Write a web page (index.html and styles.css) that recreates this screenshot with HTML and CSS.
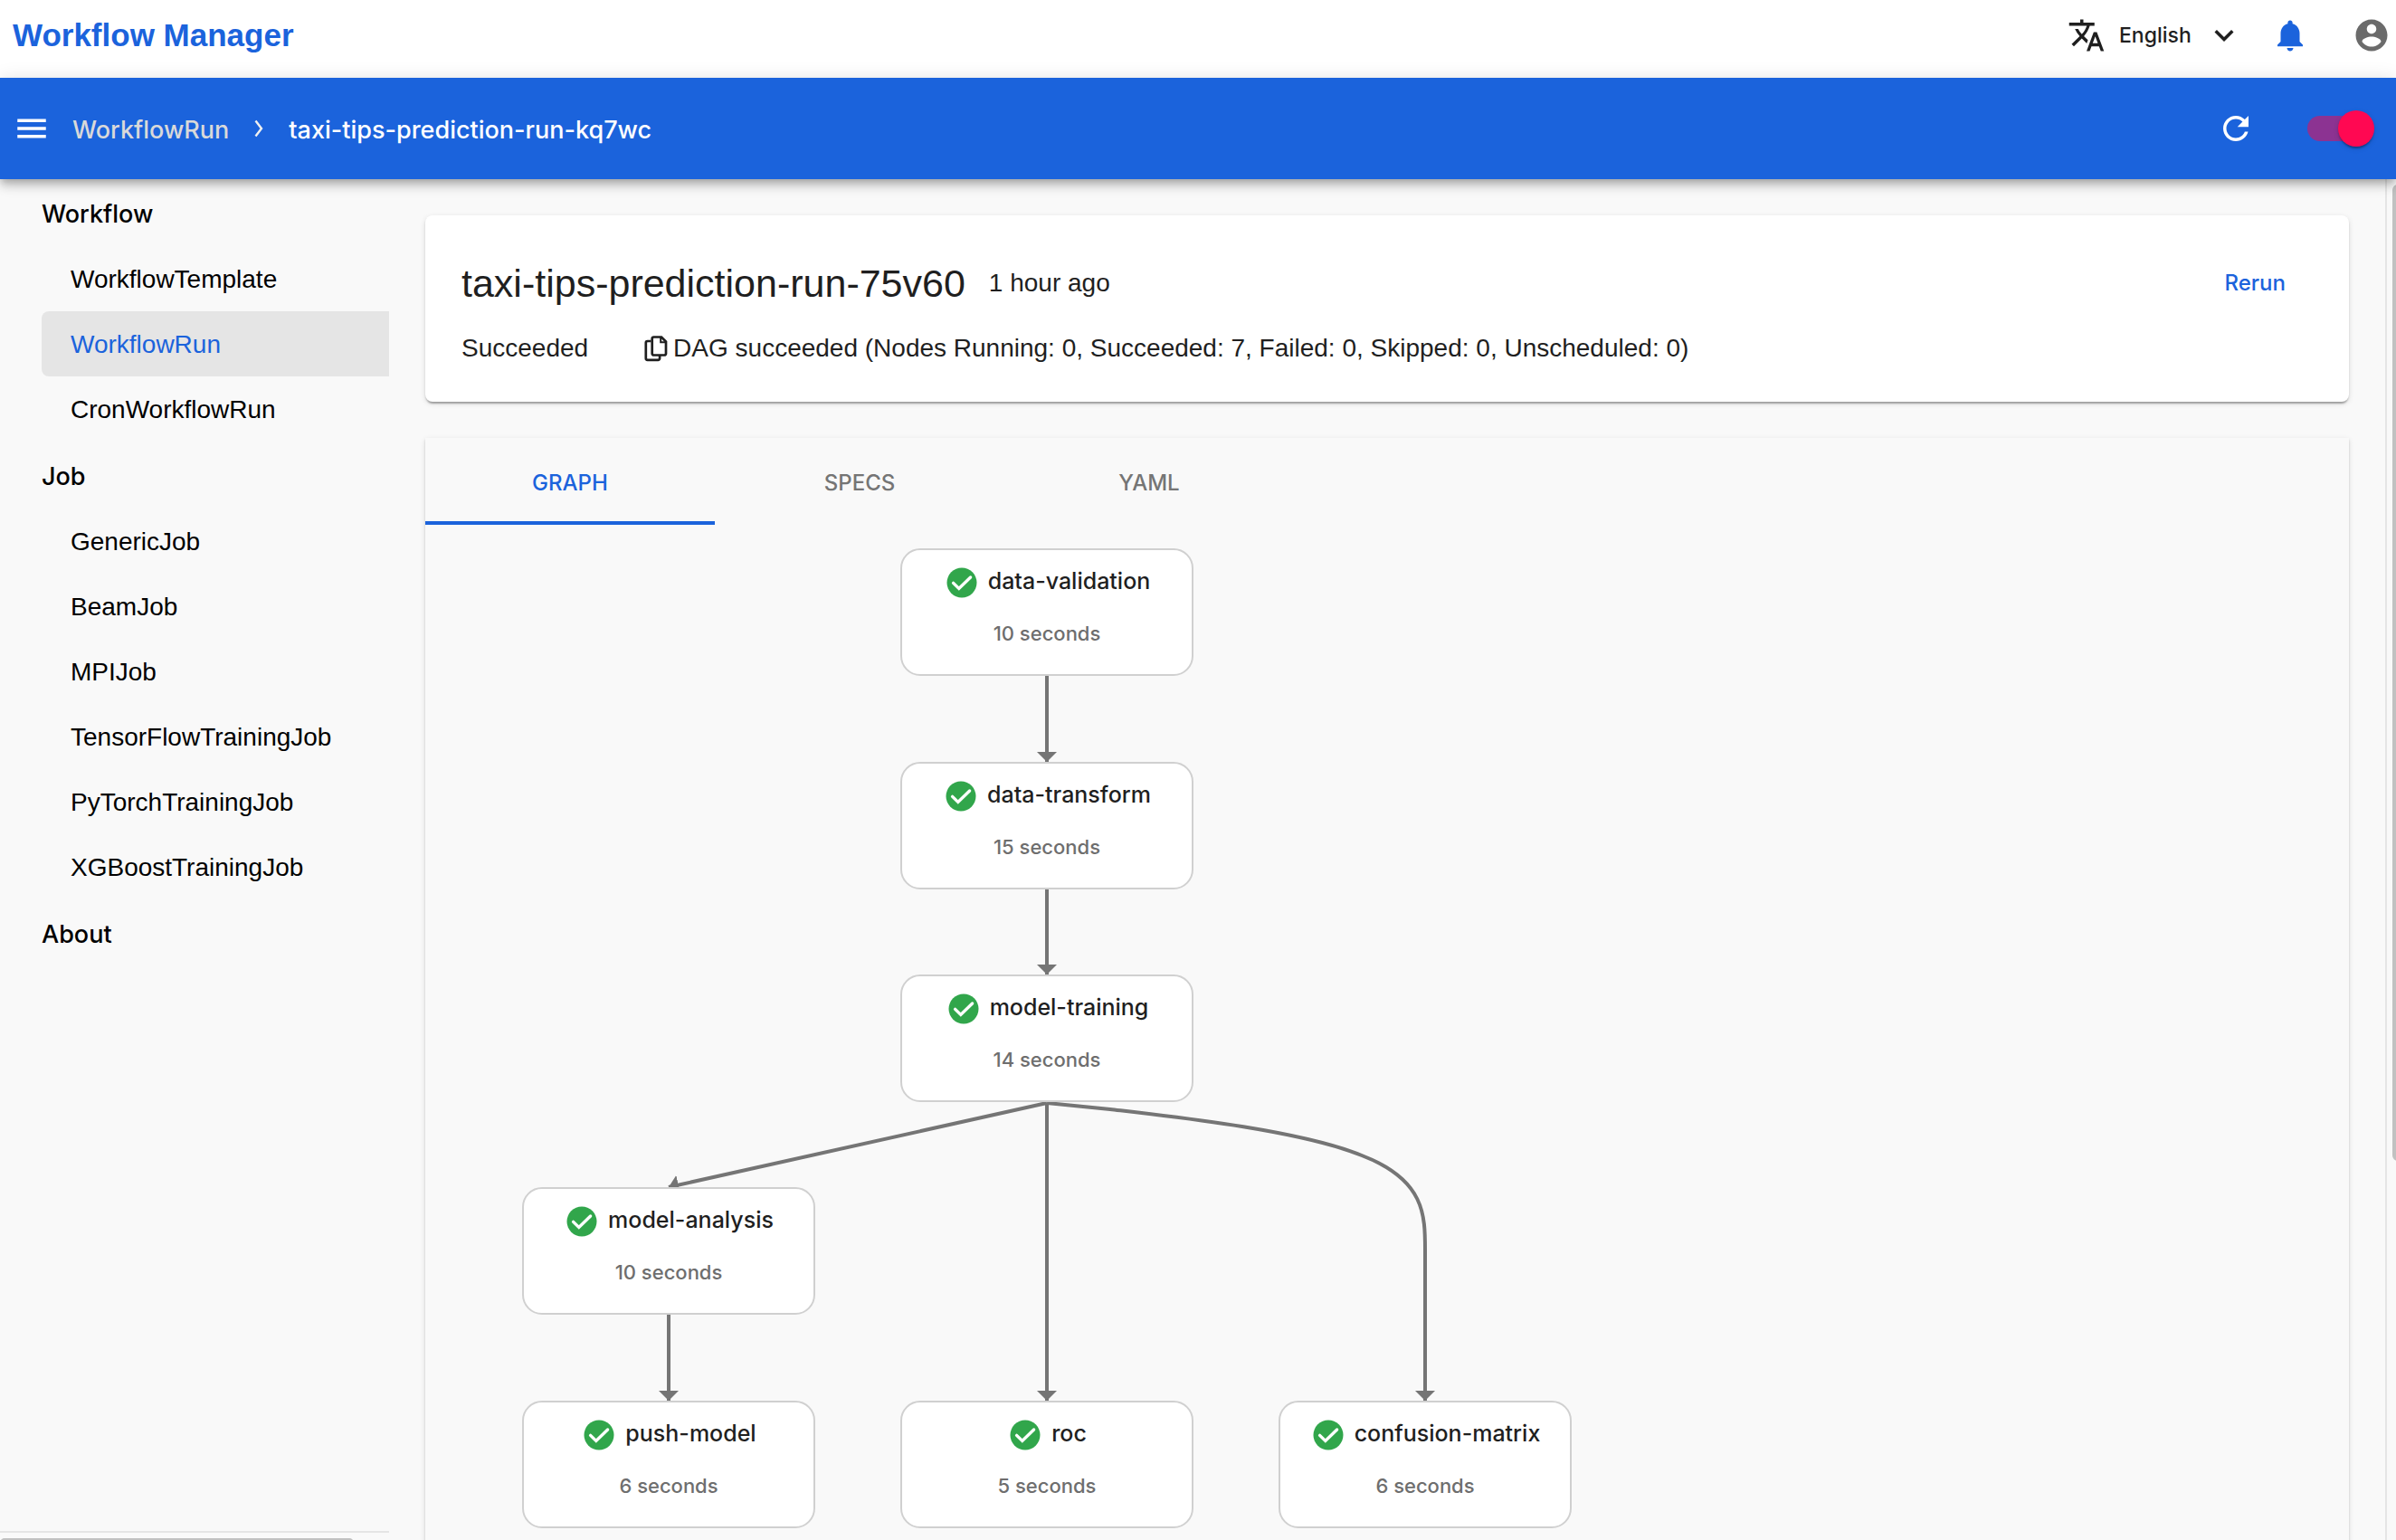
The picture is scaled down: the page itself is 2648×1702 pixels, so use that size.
FILE: index.html
```html
<!DOCTYPE html>
<html lang="en">
<head>
<meta charset="utf-8">
<meta name="viewport" content="width=device-width, initial-scale=1">
<title>Workflow Manager</title>
<link rel="stylesheet" href="styles.css">
</head>
<body>
<svg class="defs" aria-hidden="true">
  <symbol id="check" viewBox="0 0 40 40">
    <circle cx="20" cy="22" r="16.5" fill="#31a64b"/>
    <path d="M10.6 22.4l6.2 6L29.6 16" fill="none" stroke="#fff" stroke-width="3.4" stroke-linecap="round" stroke-linejoin="miter"/>
  </symbol>
</svg>

<header class="topbar">
  <a class="brand" href="#">Workflow Manager</a>
  <div class="topbar-tools">
    <label class="language">
      <svg class="icon" viewBox="0 0 24 24" aria-hidden="true"><path d="M12.87 15.07l-2.54-2.51.03-.03c1.74-1.94 2.98-4.17 3.71-6.53H17V4h-7V2H8v2H1v1.99h11.17C11.5 7.92 10.44 9.75 9 11.35 8.07 10.32 7.3 9.19 6.69 8h-2c.73 1.63 1.73 3.17 2.98 4.56l-5.09 5.02L4 19l5-5 3.11 3.11.76-2.04zM18.5 10h-2L12 22h2l1.12-3h4.75L21 22h2l-4.5-12zm-2.62 7l1.62-4.33L19.12 17h-3.24z"/></svg>
      <select class="language-select" aria-label="Language"><option>English</option></select>
      <svg class="icon" viewBox="0 0 24 24" aria-hidden="true"><path d="M16.59 8.59L12 13.17 7.41 8.59 6 10l6 6 6-6z"/></svg>
    </label>
    <button class="icon-button notify" aria-label="Notifications">
      <svg class="icon" viewBox="0 0 24 24"><path d="M12 22c1.1 0 2-.9 2-2h-4c0 1.1.89 2 2 2zm6-6v-5c0-3.07-1.64-5.64-4.5-6.32V4c0-.83-.67-1.5-1.5-1.5s-1.5.67-1.5 1.5v.68C7.63 5.36 6 7.92 6 11v5l-2 2v1h16v-1l-2-2z"/></svg>
    </button>
    <button class="icon-button account" aria-label="Account">
      <svg class="icon" viewBox="0 0 24 24"><path d="M12 2C6.48 2 2 6.48 2 12s4.48 10 10 10 10-4.48 10-10S17.52 2 12 2zm0 3c1.66 0 3 1.34 3 3s-1.34 3-3 3-3-1.34-3-3 1.34-3 3-3zm0 14.2c-2.5 0-4.71-1.28-6-3.22.03-1.99 4-3.08 6-3.08 1.99 0 5.97 1.09 6 3.08-1.29 1.94-3.5 3.22-6 3.22z"/></svg>
    </button>
  </div>
</header>

<div class="appbar">
  <button class="icon-button" aria-label="Toggle menu">
    <svg class="icon" viewBox="0 0 24 24"><path d="M3 18h18v-2H3v2zm0-5h18v-2H3v2zm0-7v2h18V6H3z"/></svg>
  </button>
  <nav class="crumbs" aria-label="Breadcrumb">
    <a class="crumb" href="#">WorkflowRun</a>
    <svg class="crumb-sep" viewBox="0 0 10 20" aria-hidden="true"><path d="M1.5 1.5L8 10l-6.500 8.500" fill="none" stroke="currentColor" stroke-width="2.400"/></svg>
    <span class="crumb current">taxi-tips-prediction-run-kq7wc</span>
  </nav>
  <button class="icon-button" aria-label="Refresh">
    <svg class="icon" viewBox="0 0 24 24"><path d="M17.65 6.35C16.2 4.9 14.21 4 12 4c-4.42 0-7.99 3.58-7.99 8s3.570 8 7.990 8c3.730 0 6.840-2.550 7.730-6h-2.080c-.82 2.330-3.040 4-5.650 4-3.310 0-6-2.690-6-6s2.690-6 6-6c1.660 0 3.140.69 4.220 1.780L13 11h7V4l-2.350 2.350z"/></svg>
  </button>
  <input class="switch" type="checkbox" checked aria-label="Auto refresh">
</div>

<div class="layout">
  <aside class="sidebar">
    <nav class="menu">
      <h2 class="menu-title">Workflow</h2>
      <a class="menu-item" href="#">WorkflowTemplate</a>
      <a class="menu-item active" href="#">WorkflowRun</a>
      <a class="menu-item" href="#">CronWorkflowRun</a>
      <h2 class="menu-title">Job</h2>
      <a class="menu-item" href="#">GenericJob</a>
      <a class="menu-item" href="#">BeamJob</a>
      <a class="menu-item" href="#">MPIJob</a>
      <a class="menu-item" href="#">TensorFlowTrainingJob</a>
      <a class="menu-item" href="#">PyTorchTrainingJob</a>
      <a class="menu-item" href="#">XGBoostTrainingJob</a>
      <h2 class="menu-title">About</h2>
    </nav>
    <div class="track-x"><div class="thumb-x"></div></div>
  </aside>

  <main class="content">
    <section class="card summary">
      <div class="summary-head">
        <h1>taxi-tips-prediction-run-75v60</h1>
        <span>1 hour ago</span>
        <button class="rerun">Rerun</button>
      </div>
      <div class="summary-status">
        <span class="phase">Succeeded</span>
        <button class="icon-button copy" aria-label="Copy message">
          <svg class="copy-icon" viewBox="0 0 28 30"><g fill="none" stroke="currentColor" stroke-width="2.700"><path d="M10.500 2.500h8.500l5 5v13.200a1.800 1.800 0 0 1-1.800 1.800H10.500a1.800 1.800 0 0 1-1.800-1.800V4.300a1.800 1.800 0 0 1 1.800-1.800z"/><path d="M7.500 7H3.600A1.800 1.800 0 0 0 1.800 8.800v17.200a1.800 1.800 0 0 0 1.800 1.800h11.700a1.800 1.800 0 0 0 1.800-1.800v-3"/><path d="M18.200 3v5.300h5.500" stroke-width="2"/></g></svg>
        </button>
        <span>DAG succeeded (Nodes Running: 0, Succeeded: 7, Failed: 0, Skipped: 0, Unscheduled: 0)</span>
      </div>
    </section>

    <section class="card detail">
      <div class="tabs" role="tablist">
        <button class="tab selected" role="tab" aria-selected="true">GRAPH</button>
        <button class="tab" role="tab" aria-selected="false">SPECS</button>
        <button class="tab" role="tab" aria-selected="false">YAML</button>
      </div>
      <div class="graph">
        <svg class="edges" width="1300" height="1140" viewBox="0 0 1300 1140" aria-hidden="true">
          <defs>
            <marker id="arrow" markerUnits="userSpaceOnUse" markerWidth="11" markerHeight="22" refX="11" refY="11" orient="auto"><path d="M0 0L11 11L0 22z" fill="#757575"/></marker>
          </defs>
          <g fill="none" stroke="#757575" stroke-width="4" marker-end="url(#arrow)">
            <path d="M687 167V262"/>
            <path d="M687 403V497"/>
            <path d="M687 639V968"/>
            <path d="M687 639L269 732"/>
            <path d="M269 873V968"/>
            <path d="M687 639L757 646C826 654 966 669 1035 697C1105 724 1105 763 1105 802V968"/>
          </g>
        </svg>
        <div class="node n1"><div class="node-name"><svg><use href="#check"/></svg>data-validation</div><div class="node-time">10 seconds</div></div>
        <div class="node n2"><div class="node-name"><svg><use href="#check"/></svg>data-transform</div><div class="node-time">15 seconds</div></div>
        <div class="node n3"><div class="node-name"><svg><use href="#check"/></svg>model-training</div><div class="node-time">14 seconds</div></div>
        <div class="node n4"><div class="node-name"><svg><use href="#check"/></svg>model-analysis</div><div class="node-time">10 seconds</div></div>
        <div class="node n5"><div class="node-name"><svg><use href="#check"/></svg>push-model</div><div class="node-time">6 seconds</div></div>
        <div class="node n6"><div class="node-name"><svg><use href="#check"/></svg>roc</div><div class="node-time">5 seconds</div></div>
        <div class="node n7"><div class="node-name"><svg><use href="#check"/></svg>confusion-matrix</div><div class="node-time">6 seconds</div></div>
      </div>
    </section>
  </main>
  <div class="track-y"><div class="thumb-y"></div></div>
</div>
</body>
</html>
```
FILE: styles.css
```css
* { box-sizing: border-box; }

body {
  margin: 0;
  height: 100vh;
  display: flex;
  flex-direction: column;
  overflow: hidden;
  background: #f9f9f9;
  color: #1f1f1f;
  font-family: "Liberation Sans", Arial, sans-serif;
  font-size: 28px;
  line-height: 36px;
}

a { color: inherit; text-decoration: none; }

button,
select {
  padding: 0;
  border: 0;
  background: none;
  color: inherit;
  font: 500 24px/36px Inter, sans-serif;
}

.defs { position: absolute; width: 0; height: 0; }

.icon { display: block; width: 42px; height: 42px; fill: currentColor; }
.icon-button { display: flex; flex: none; }

/* Top bar */
.topbar {
  display: flex;
  align-items: center;
  justify-content: space-between;
  height: 86px;
  padding: 0 6px 8px 14px;
  background: #fff;
}
.brand { color: #1b63dc; font-size: 35px; font-weight: 700; }
.topbar-tools { display: flex; align-items: center; }
.language { display: flex; align-items: center; gap: 15px; margin-right: 31px; }
.language-select { appearance: none; font-size: 23px; }
.notify { margin-right: 48px; color: #1b63dc; }
.account { color: #6b6b6b; }

/* Blue bar */
.appbar {
  position: relative;
  z-index: 1;
  display: flex;
  flex: none;
  align-items: center;
  height: 112px;
  padding: 0 30px 0 14px;
  background: #1b63dc;
  color: #fff;
  box-shadow: 0 4px 8px -2px rgba(0, 0, 0, .2), 0 8px 10px rgba(0, 0, 0, .14), 0 2px 20px rgba(0, 0, 0, .12);
}
.crumbs {
  display: flex;
  flex: 1;
  align-items: center;
  gap: 28px;
  margin-left: 24px;
}
.crumb { padding-top: 4px; color: #d9d9d9; font: 500 27px/36px Inter, sans-serif; }
.crumb.current { color: #fff; }
.crumb-sep { width: 10px; height: 20px; color: #f0f0f0; }
.switch {
  appearance: none;
  display: flex;
  align-items: center;
  justify-content: flex-end;
  width: 68px;
  height: 28px;
  margin: 0 0 0 58px;
  border-radius: 14px;
  background: #8c3392;
}
.switch::before {
  content: "";
  flex: none;
  width: 40px;
  height: 40px;
  margin-right: -6px;
  border-radius: 50%;
  background: #ff0852;
  box-shadow: 0 4px 2px -2px rgba(0, 0, 0, .2), 0 2px 2px rgba(0, 0, 0, .14), 0 2px 6px rgba(0, 0, 0, .12);
}

/* Page body */
.layout { display: flex; flex: 1; min-height: 0; }

.sidebar {
  display: flex;
  flex-direction: column;
  flex: none;
  width: 430px;
  color: #000;
}
.menu { flex: 1; min-height: 0; padding-left: 46px; }
.menu-title { margin: 0; padding-top: 4px; font: 500 27px/70px Inter, sans-serif; }
.menu-item {
  display: block;
  padding: 2px 0 0 32px;
  border-radius: 8px 0 0 8px;
  line-height: 70px;
}
.menu-item.active { background: #e5e5e5; color: #1b63dc; }

.track-x {
  height: 10px;
  padding-top: 6px;
  border-top: 2px solid #e5e5e5;
  overflow: hidden;
}
.thumb-x { width: 91%; height: 10px; border-radius: 6px; background: #c1c1c1; }
.track-y {
  flex: none;
  width: 12px;
  padding: 6px 0 0 6px;
  border-left: 2px solid #e5e5e5;
  overflow: hidden;
}
.thumb-y { width: 14px; height: 72%; border-radius: 6px; background: #c1c1c1; }

.content {
  display: flex;
  flex: 1;
  flex-direction: column;
  gap: 40px;
  min-width: 0;
  padding: 40px 40px 0;
  overflow: hidden;
}
.card {
  flex: none;
  box-shadow: 0 4px 2px -2px rgba(0, 0, 0, .2), 0 2px 2px rgba(0, 0, 0, .14), 0 2px 6px rgba(0, 0, 0, .12);
}

/* Run summary */
.summary {
  display: flex;
  flex-direction: column;
  gap: 24px;
  padding: 45px 70px 41px 40px;
  border-radius: 8px;
  background: #fff;
}
.summary-head { display: flex; align-items: center; gap: 26px; }
.summary-head h1 { margin: 0; font-size: 43px; font-weight: 400; line-height: 60px; }
.rerun { margin-left: auto; color: #1b63dc; }
.summary-status { display: flex; align-items: center; }
.phase { margin-right: 62px; }
.copy { margin-right: 4px; }
.copy-icon { width: 28px; height: 30px; }

/* Tabs and graph */
.tabs { display: flex; }
.tab {
  width: 320px;
  height: 96px;
  padding-top: 8px;
  border-bottom: 4px solid transparent;
  color: #757575;
}
.tab.selected { border-color: #1b63dc; color: #1b63dc; }

.graph { position: relative; height: 1140px; }
.edges { display: block; }
.node {
  position: absolute;
  width: 324px;
  height: 141px;
  padding-top: 4px;
  border: 2px solid #d0d0d0;
  border-radius: 22px;
  background: #fff;
  text-align: center;
}
.node-name {
  display: flex;
  align-items: center;
  justify-content: center;
  gap: 9px;
  font: 500 25px/60px Inter, sans-serif;
}
.node-name svg { width: 40px; height: 40px; }
.node-time { margin-top: 8px; color: #6e6e6e; font: 500 22px/40px Inter, sans-serif; }
.n1 { left: 525px; top: 26px; }
.n2 { left: 525px; top: 262px; }
.n3 { left: 525px; top: 497px; }
.n4 { left: 107px; top: 732px; }
.n5 { left: 107px; top: 968px; }
.n6 { left: 525px; top: 968px; }
.n7 { left: 943px; top: 968px; }
```
